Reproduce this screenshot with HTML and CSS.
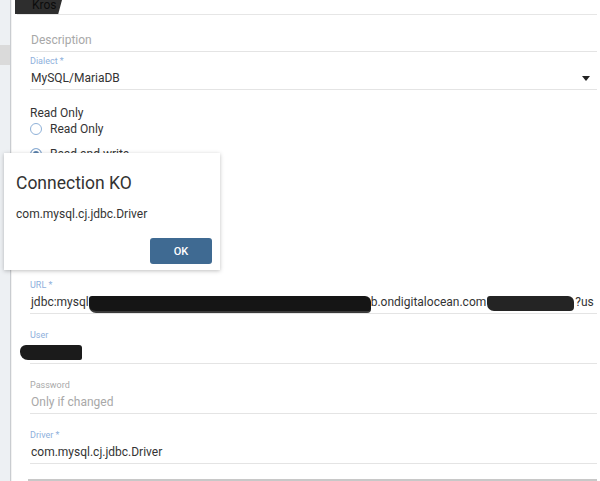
FILE: index.html
```html
<!DOCTYPE html>
<html lang="en">
<head>
    <meta charset="UTF-8">
    <meta name="viewport" content="width=device-width, initial-scale=1.0">
    <title>Connection</title>
    <link rel="stylesheet" href="styles.css">
</head>
<body>
    <div class="page">
        <div class="sidebar">
            <div class="sidebar-item"></div>
        </div>
        <div class="content">
            <div class="name-field">
                <span class="name-mark">Kros</span>
            </div>
            <div class="field desc-field">
                <div class="input placeholder">Description</div>
            </div>
            <div class="field">
                <label>Dialect *</label>
                <div class="input select">MySQL/MariaDB<span class="caret"></span></div>
            </div>
            <div class="group">
                <div class="group-label">Read Only</div>
                <div class="radio"><span class="dot"></span>Read Only</div>
                <div class="radio checked"><span class="dot"></span>Read and write</div>
            </div>
            <div class="field url-field">
                <label>URL *</label>
                <div class="input url">jdbc:mysql<span class="mark url-mark1"></span>b.ondigitalocean.com<span class="mark url-mark2"></span>?us</div>
            </div>
            <div class="field">
                <label>User</label>
                <div class="input"><span class="mark user-mark"></span></div>
            </div>
            <div class="field">
                <label class="muted">Password</label>
                <div class="input placeholder">Only if changed</div>
            </div>
            <div class="field">
                <label>Driver *</label>
                <div class="input">com.mysql.cj.jdbc.Driver</div>
            </div>
            <div class="footer-bar"></div>
        </div>

        <div class="dialog">
            <h2>Connection KO</h2>
            <p>com.mysql.cj.jdbc.Driver</p>
            <div class="dialog-actions">
                <button type="button">OK</button>
            </div>
        </div>
    </div>
</body>
</html>
```

FILE: styles.css
```css
html, body {
    margin: 0;
    height: 100%;
    overflow: hidden;
}
body {
    font-family: Roboto, "Liberation Sans", sans-serif;
    color: #333;
    background-color: white;
}
.page {
    position: relative;
    display: flex;
    height: 481px;
    overflow: hidden;
}
.sidebar {
    width: 10px;
    flex-shrink: 0;
    background-color: #edf0f3;
    border-right: 1px solid #c9ccd0;
    padding-top: 45px;
}
.sidebar-item {
    height: 20px;
    background-color: #dadada;
}
.content {
    flex: 1;
    min-width: 0;
    padding: 0 3px 0 18px;
    border-left: 1px solid #f2f2f2;
}
.name-field {
    height: 14px;
    margin-left: -13px;
    border-bottom: 1px solid #e6e6e6;
}
.name-mark {
    display: block;
    width: 47px;
    height: 14px;
    margin-left: -2px;
    padding-left: 17px;
    box-sizing: border-box;
    background-color: #2e2e2e;
    clip-path: polygon(0 0, 100% 0, 92% 100%, 0 100%);
    color: #0c0c0c;
    font-size: 12px;
    line-height: 10px;
    overflow: hidden;
}
.field {
    margin-bottom: 15px;
}
.field label {
    display: block;
    height: 12px;
    font-size: 9px;
    line-height: 12px;
    color: #8eb0dc;
}
.field label.muted {
    color: #a9a9a9;
}
.desc-field {
    margin-top: 2px;
    margin-bottom: 3px;
    padding-top: 12px;
}
.input {
    position: relative;
    height: 22px;
    line-height: 22px;
    font-size: 12px;
    padding-left: 1px;
    border-bottom: 1px solid #e4e4e4;
    white-space: nowrap;
}
.placeholder {
    color: #a8a8a8;
}
.caret {
    position: absolute;
    right: 7px;
    top: 9px;
    border-left: 4px solid transparent;
    border-right: 4px solid transparent;
    border-top: 5px solid #222;
}
.group {
    margin-top: 13px;
}
.group-label {
    font-size: 12px;
    line-height: 16px;
}
.radio {
    display: flex;
    align-items: center;
    height: 16px;
    font-size: 12px;
    line-height: 16px;
}
.radio + .radio {
    margin-top: 9px;
}
.dot {
    width: 10px;
    height: 10px;
    margin-right: 8px;
    border: 1.5px solid #8fb1d8;
    border-radius: 50%;
    background-color: white;
}
.radio.checked .dot {
    background-color: #5b82ad;
    box-shadow: inset 0 0 0 2px white;
}
.url-field {
    margin-top: 117px;
}
.url {
    display: flex;
    align-items: center;
    overflow: hidden;
}
.mark {
    display: inline-block;
    flex-shrink: 0;
    background-color: #151515;
    border-radius: 3px 6px 4px 7px;
}
.url-mark1 {
    width: 282px;
    height: 15px;
    margin-top: 4px;
    border-bottom: 2px solid #3a3a3a;
}
.url-mark2 {
    width: 87px;
    height: 15px;
    margin: 2px 1px 0 1px;
    background-color: #242424;
}
.user-mark {
    position: absolute;
    left: -10px;
    top: 4px;
    width: 62px;
    height: 15px;
    background-color: #1b1b1b;
    border-radius: 6px 3px 2px 8px;
}
.footer-bar {
    height: 30px;
    margin-left: -2px;
    background-color: #c8c8c8;
}
.dialog {
    position: absolute;
    left: 4px;
    top: 153px;
    width: 216px;
    height: 117px;
    padding: 18px 8px 0 12px;
    box-sizing: border-box;
    background-color: white;
    box-shadow: 0 1px 4px rgba(0, 0, 0, 0.25);
}
.dialog h2 {
    margin: 0;
    font-size: 17.5px;
    font-weight: normal;
    line-height: 24px;
    color: #333;
}
.dialog p {
    margin: 11px 0 0;
    font-size: 12px;
    line-height: 16px;
}
.dialog-actions {
    display: flex;
    justify-content: flex-end;
    margin-top: 16px;
}
.dialog button {
    width: 62px;
    height: 26px;
    border: none;
    border-radius: 3px;
    background-color: #3f6a92;
    color: white;
    font-family: Roboto, "Liberation Sans", sans-serif;
    font-size: 11px;
    font-weight: 500;
}
```
